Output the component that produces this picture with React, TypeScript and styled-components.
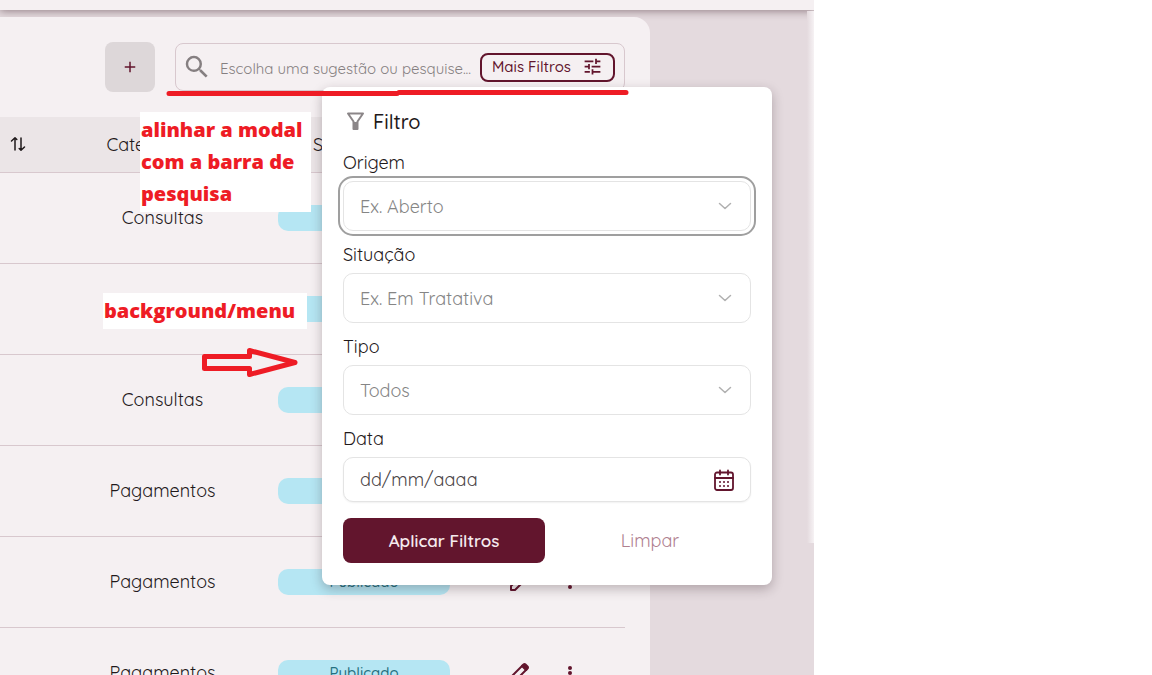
import React from "react";
import styled, { createGlobalStyle, css } from "styled-components";
import { MdAdd, MdSearch, MdTune } from "react-icons/md";

const wine = "#62152d";
const line = "#d8c8ce";

const GlobalStyle = createGlobalStyle`
  * { box-sizing: border-box; }
  body {
    margin: 0;
    background: #fff;
    color: #1f191b;
    font-family: Quicksand, Lato, "Liberation Sans", sans-serif;
    font-size: 18px;
    overflow: hidden;
  }
  button, input, select { font: inherit; color: inherit; }
`;

const Page = styled.div`
  position: relative;
  height: 100vh;
  padding-right: 338px;
`;

const Screen = styled.main`
  position: relative;
  display: flex;
  flex-direction: column;
  height: 100%;
  overflow: hidden;
  background: #e4dade;
`;

const TopBar = styled.header`
  flex: none;
  height: 10px;
  background: #f5f0f2;
  box-shadow: 0 1px 8px rgba(60, 30, 40, 0.5);
`;

const ScrollEdge = styled.div`
  position: absolute;
  top: 11px;
  right: 0;
  width: 7px;
  height: 532px;
  background: linear-gradient(to right, #e4dade, #f6f2f4);
`;

const Card = styled.section`
  position: relative;
  flex: 1;
  margin: 7px 164px 0 0;
  padding: 25px 25px 0 0;
  border-top-right-radius: 16px;
  background: #f5f0f2;
`;

const Toolbar = styled.div`
  display: flex;
  align-items: center;
  justify-content: flex-end;
  gap: 20px;
  margin-bottom: 25px;
`;

const AddButton = styled.button`
  display: grid;
  place-items: center;
  width: 50px;
  height: 50px;
  padding: 0;
  border: 0;
  border-radius: 8px;
  background: #ddd7d9;
  color: ${wine};
`;

const SearchBox = styled.div`
  position: relative;
  display: flex;
  align-items: center;
  gap: 8px;
  width: 450px;
  height: 48px;
  padding: 0 9px 0 6px;
  border: 1px solid ${line};
  border-radius: 8px;
  color: #857f81;
`;

const SearchInput = styled.input`
  flex: 1;
  min-width: 0;
  padding: 2px 0 0;
  border: 0;
  outline: 0;
  background: none;
  font-size: 15px;
  &::placeholder { color: #857f81; opacity: 1; }
`;

const MoreFilters = styled.button`
  display: flex;
  align-items: center;
  justify-content: space-between;
  width: 135px;
  height: 29px;
  padding: 0 10px 1px;
  border: 2px solid ${wine};
  border-radius: 8px;
  background: none;
  color: ${wine};
  font-size: 15px;
  font-weight: 500;
`;

const Table = styled.table`
  width: 100%;
  table-layout: fixed;
  border-collapse: collapse;
  text-align: center;
  th, td { padding: 0; border-bottom: 1px solid ${line}; }
  th { height: 55px; background: #ebe5e7; font-weight: 400; }
  td { height: 91px; }
`;

const HeadLabel = styled.span`
  display: flex;
  align-items: center;
  justify-content: center;
  gap: 14px;
`;

const SortCell = styled.span`
  display: flex;
  padding-left: 10px;
`;

const Badge = styled.span`
  display: block;
  width: 172px;
  height: 26px;
  margin: 0 auto;
  border-radius: 10px;
  background: #b5e6f3;
  color: #25707f;
  font-size: 15px;
  font-weight: 500;
  line-height: 26px;
`;

const Actions = styled.div`
  display: flex;
  align-items: center;
  gap: 38px;
  padding-left: 31px;
`;

const IconButton = styled.button`
  display: flex;
  padding: 0;
  border: 0;
  background: none;
  color: ${wine};
`;

const Modal = styled.form`
  position: absolute;
  z-index: 2;
  top: 43px;
  left: 146px;
  width: 450px;
  padding: 20px 21px 22px;
  border-radius: 8px;
  background: #fff;
  color: #1f191b;
  box-shadow: 0 4px 12px rgba(40, 20, 28, 0.28);
`;

const ModalTitle = styled.h2`
  display: flex;
  align-items: center;
  gap: 8px;
  height: 28px;
  margin: 0 0 16px;
  padding-left: 3px;
  font-size: 20px;
  font-weight: 500;
`;

const Field = styled.div`
  margin-bottom: 12px;
`;

const Label = styled.label`
  display: block;
  margin-bottom: 6px;
  font-size: 18px;
  line-height: 24px;
`;

const Control = styled.div`
  display: grid;
  align-items: center;
  > * { grid-area: 1 / 1; }
  > svg, > button { justify-self: end; margin-right: 16px; }
  > svg { margin-right: 19px; pointer-events: none; }
`;

const inputBox = css`
  width: 100%;
  padding: 0 16px;
  border: 1px solid #e4e4e4;
  border-radius: 10px;
  background: #fff;
`;

const Select = styled.select<{ $focused?: boolean }>`
  ${inputBox}
  height: 50px;
  appearance: none;
  color: #858585;
  outline: ${(p) => (p.$focused ? "2px solid #9f9f9f" : "0")};
  outline-offset: 3px;
`;

const DateInput = styled.input`
  ${inputBox}
  height: 45px;
  box-shadow: 0 1px 2px rgba(0, 0, 0, 0.06);
  &::placeholder { color: #4a4446; opacity: 1; }
`;

const Buttons = styled.div`
  display: grid;
  grid-template-columns: 1fr 1fr;
  gap: 4px;
  margin-top: 16px;
`;

const ModalButton = styled.button<{ $primary?: boolean }>`
  height: 45px;
  border: 0;
  border-radius: 8px;
  background: ${(p) => (p.$primary ? wine : "transparent")};
  color: ${(p) => (p.$primary ? "#f5eaee" : "#b0808f")};
  font-size: ${(p) => (p.$primary ? 17 : 18)}px;
  font-weight: ${(p) => (p.$primary ? 600 : 400)};
`;

const Note = styled.p<{ $x: number; $y: number; $w: number }>`
  position: absolute;
  z-index: 3;
  left: ${(p) => p.$x}px;
  top: ${(p) => p.$y}px;
  width: ${(p) => p.$w}px;
  margin: 0;
  padding: 2px 1px;
  background: #fff;
  color: #ee1c25;
  font-family: "Open Sans", sans-serif;
  font-size: 20px;
  font-weight: 800;
  line-height: 32px;
  white-space: nowrap;
`;

const Marks = styled.svg`
  position: absolute;
  z-index: 4;
  top: 0;
  left: 0;
  pointer-events: none;
`;

const SortIcon = () => (
  <svg width="16" height="18" viewBox="0 0 16 18" fill="none" stroke="#1f191b" strokeWidth="1.5" strokeLinecap="round" strokeLinejoin="round">
    <path d="M5 15V3M1.5 6 5 2.7 6.8 4.5M11 3v12M14.500 12 11 15.300 9.200 13.500" />
  </svg>
);

const FunnelIcon = () => (
  <svg width="19" height="19" viewBox="0 0 19 19" fill="none" stroke="#8b8688" strokeWidth="2" strokeLinejoin="round">
    <path d="M2 1.500h15l-5.500 8v7.500h-4V9.500z" />
    <path strokeWidth="3" d="M9.500 10v7" />
  </svg>
);

const Chevron = () => (
  <svg width="14" height="8" viewBox="0 0 14 8" fill="none" stroke="#b0b0b0" strokeWidth="1.5" strokeLinecap="round" strokeLinejoin="round">
    <path d="m1.500 1.500 5.500 5 5.500-5" />
  </svg>
);

const CalendarIcon = () => (
  <svg width="22" height="22" viewBox="0 0 22 22" fill="none" stroke={wine} strokeWidth="1.8" strokeLinecap="round">
    <rect x="2" y="3.500" width="18" height="17.500" rx="2" />
    <path d="M2 9h18M7 1.500v4M15 1.500v4" />
    <path strokeWidth="2" d="M7 13h.01M11 13h.01M15 13h.01M7 17h.01M11 17h.01M15 17h.01" />
  </svg>
);

const PencilIcon = () => (
  <svg width="20" height="20" viewBox="0 0 20 20" fill="none" stroke={wine} strokeWidth="2" strokeLinejoin="round">
    <path d="M2 18v-4L13.500 2.500l4 4L6 18z" />
    <path fill={wine} d="m13 3 1.500-1.500q1-1 2 0l2 2q1 1 0 2L17 7z" />
  </svg>
);

const DotsIcon = () => (
  <svg width="6" height="18" viewBox="0 0 6 18" fill={wine}>
    <circle cx="3" cy="4" r="2" />
    <circle cx="3" cy="9" r="2" />
    <circle cx="3" cy="14" r="2" />
  </svg>
);

const rows = ["Consultas", "Consultas", "Consultas", "Pagamentos", "Pagamentos", "Pagamentos"];

const selects = [
  { id: "origem", label: "Origem", value: "Ex. Aberto", focused: true },
  { id: "situacao", label: "Situação", value: "Ex. Em Tratativa" },
  { id: "tipo", label: "Tipo", value: "Todos" },
];

const FilterModal = () => (
  <Modal>
    <ModalTitle><FunnelIcon />Filtro</ModalTitle>
    {selects.map((s) => (
      <Field key={s.id}>
        <Label htmlFor={s.id}>{s.label}</Label>
        <Control>
          <Select id={s.id} $focused={s.focused}><option>{s.value}</option></Select>
          <Chevron />
        </Control>
      </Field>
    ))}
    <Label htmlFor="data">Data</Label>
    <Control>
      <DateInput id="data" placeholder="dd/mm/aaaa" />
      <IconButton type="button" aria-label="Abrir calendário"><CalendarIcon /></IconButton>
    </Control>
    <Buttons>
      <ModalButton type="button" $primary>Aplicar Filtros</ModalButton>
      <ModalButton type="button">Limpar</ModalButton>
    </Buttons>
  </Modal>
);

export default function App() {
  return (
    <Page>
      <GlobalStyle />
      <Screen>
        <TopBar />
        <ScrollEdge />
        <Card>
          <Toolbar>
            <AddButton aria-label="Adicionar"><MdAdd size={18} /></AddButton>
            <SearchBox>
              <MdSearch size={30} />
              <SearchInput aria-label="Pesquisar" placeholder="Escolha uma sugestão ou pesquise..." />
              <MoreFilters>Mais Filtros<MdTune size={21} /></MoreFilters>
              <FilterModal />
            </SearchBox>
          </Toolbar>
          <Table>
            <colgroup>
              <col style={{ width: "12%" }} />
              <col style={{ width: "28%" }} />
              <col style={{ width: "36.5%" }} />
              <col />
            </colgroup>
            <thead>
              <tr>
                <th><SortCell><SortIcon /></SortCell></th>
                <th><HeadLabel>Categoria<SortIcon /></HeadLabel></th>
                <th><HeadLabel>Situação<SortIcon /></HeadLabel></th>
                <th />
              </tr>
            </thead>
            <tbody>
              {rows.map((category, i) => (
                <tr key={i}>
                  <td />
                  <td>{category}</td>
                  <td><Badge>Publicado</Badge></td>
                  <td>
                    <Actions>
                      <IconButton aria-label="Editar"><PencilIcon /></IconButton>
                      <IconButton aria-label="Mais opções"><DotsIcon /></IconButton>
                    </Actions>
                  </td>
                </tr>
              ))}
            </tbody>
          </Table>
        </Card>
      </Screen>
      <Note $x={140} $y={112} $w={171}>alinhar a modal<br />com a barra de<br />pesquisa</Note>
      <Note $x={103} $y={293} $w={204}>background/menu</Note>
      <Marks width="640" height="390" fill="none" stroke="#ee1c25" strokeWidth="5">
        <path strokeLinecap="round" d="M169 93.500H397M399 92.500H626" />
        <path strokeLinejoin="round" d="M204.500 356.500H249.500V350.500L295 362.500L249.500 374.500V368.500H204.500Z" />
      </Marks>
    </Page>
  );
}
